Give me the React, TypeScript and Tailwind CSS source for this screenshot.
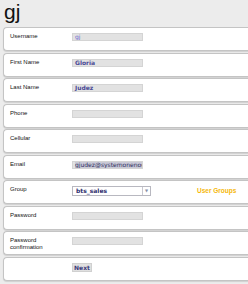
const rows: { label: string[]; value?: string; kind?: "text" | "select" | "button"; tone?: string }[] = [
  { label: ["Username"], value: "gj", tone: "text-[#6f6cd0] font-normal" },
  { label: ["First Name"], value: "Gloria" },
  { label: ["Last Name"], value: "Judez" },
  { label: ["Phone"] },
  { label: ["Cellular"] },
  { label: ["Email"], value: "gjudez@systemonenoc", tone: "bg-[#c9c9d6] text-[#2e2e5e] font-normal" },
  { label: ["Group"], value: "bts_sales", kind: "select" },
  { label: ["Password"] },
  { label: ["Password", "confirmation"] },
  { label: [], value: "Next", kind: "button" },
];

const Field = ({ row }: { row: (typeof rows)[number] }) => {
  if (row.kind === "select") {
    return (
      <div className="flex items-center gap-[46px] leading-[8px]">
        <div className="flex h-[10px] w-[79px] border border-[#b8b8c0] bg-white">
          <span className="flex-1 pl-[3px] text-[6px] leading-[8px] font-bold text-[#2e2e6e]">{row.value}</span>
          <span className="flex w-[8px] items-center justify-center border-l border-[#c8c8d0] text-[4px] leading-[4px] text-[#8890a8]">▼</span>
        </div>
        <span className="font-['Liberation_Sans',sans-serif] text-[6.5px] font-bold text-[#f5b80a]">User Groups</span>
      </div>
    );
  }
  if (row.kind === "button") {
    return (
      <div className="h-[9px] w-[20px] border border-[#d0d0d0] bg-[#e0e0e0] text-center text-[6px] leading-[7px] font-bold text-[#3a3a7a]">
        {row.value}
      </div>
    );
  }
  return (
    <div className="h-[8px] w-[71px] overflow-hidden border border-[#d4d4d4] bg-[#e2e2e2] pl-[2px] text-[6px] leading-[6px]">
      {row.value && (
        <span className={`whitespace-nowrap ${row.tone ?? "font-bold text-[#4a4a96]"}`}>{row.value}</span>
      )}
    </div>
  );
};

export default function App() {
  return (
    <div className="h-[284px] w-[248px] overflow-hidden bg-[#ececec] font-['DejaVu_Sans',sans-serif]">
      <div className="h-[27px] pl-[4px] pt-[1px] text-[21px] leading-[22px] text-[#111] font-['Liberation_Sans',sans-serif]">gj</div>
      <div className="flex flex-col gap-[1.5px] pl-[3px]">
        {rows.map((row, i) => (
          <div
            key={i}
            className="flex h-[24px] items-start rounded-l-[4px] border border-r-0 border-[#c4c4c4] bg-white pl-[6px] pt-[5px] shadow-[0_1px_1px_rgba(0,0,0,0.12)]"
          >
            <div className="w-[62px] font-['Liberation_Sans',sans-serif] text-[6px] leading-[7px] text-[#111]">
              {row.label.map((l) => (
                <div key={l}>{l}</div>
              ))}
            </div>
            <Field row={row} />
          </div>
        ))}
      </div>
    </div>
  );
}
